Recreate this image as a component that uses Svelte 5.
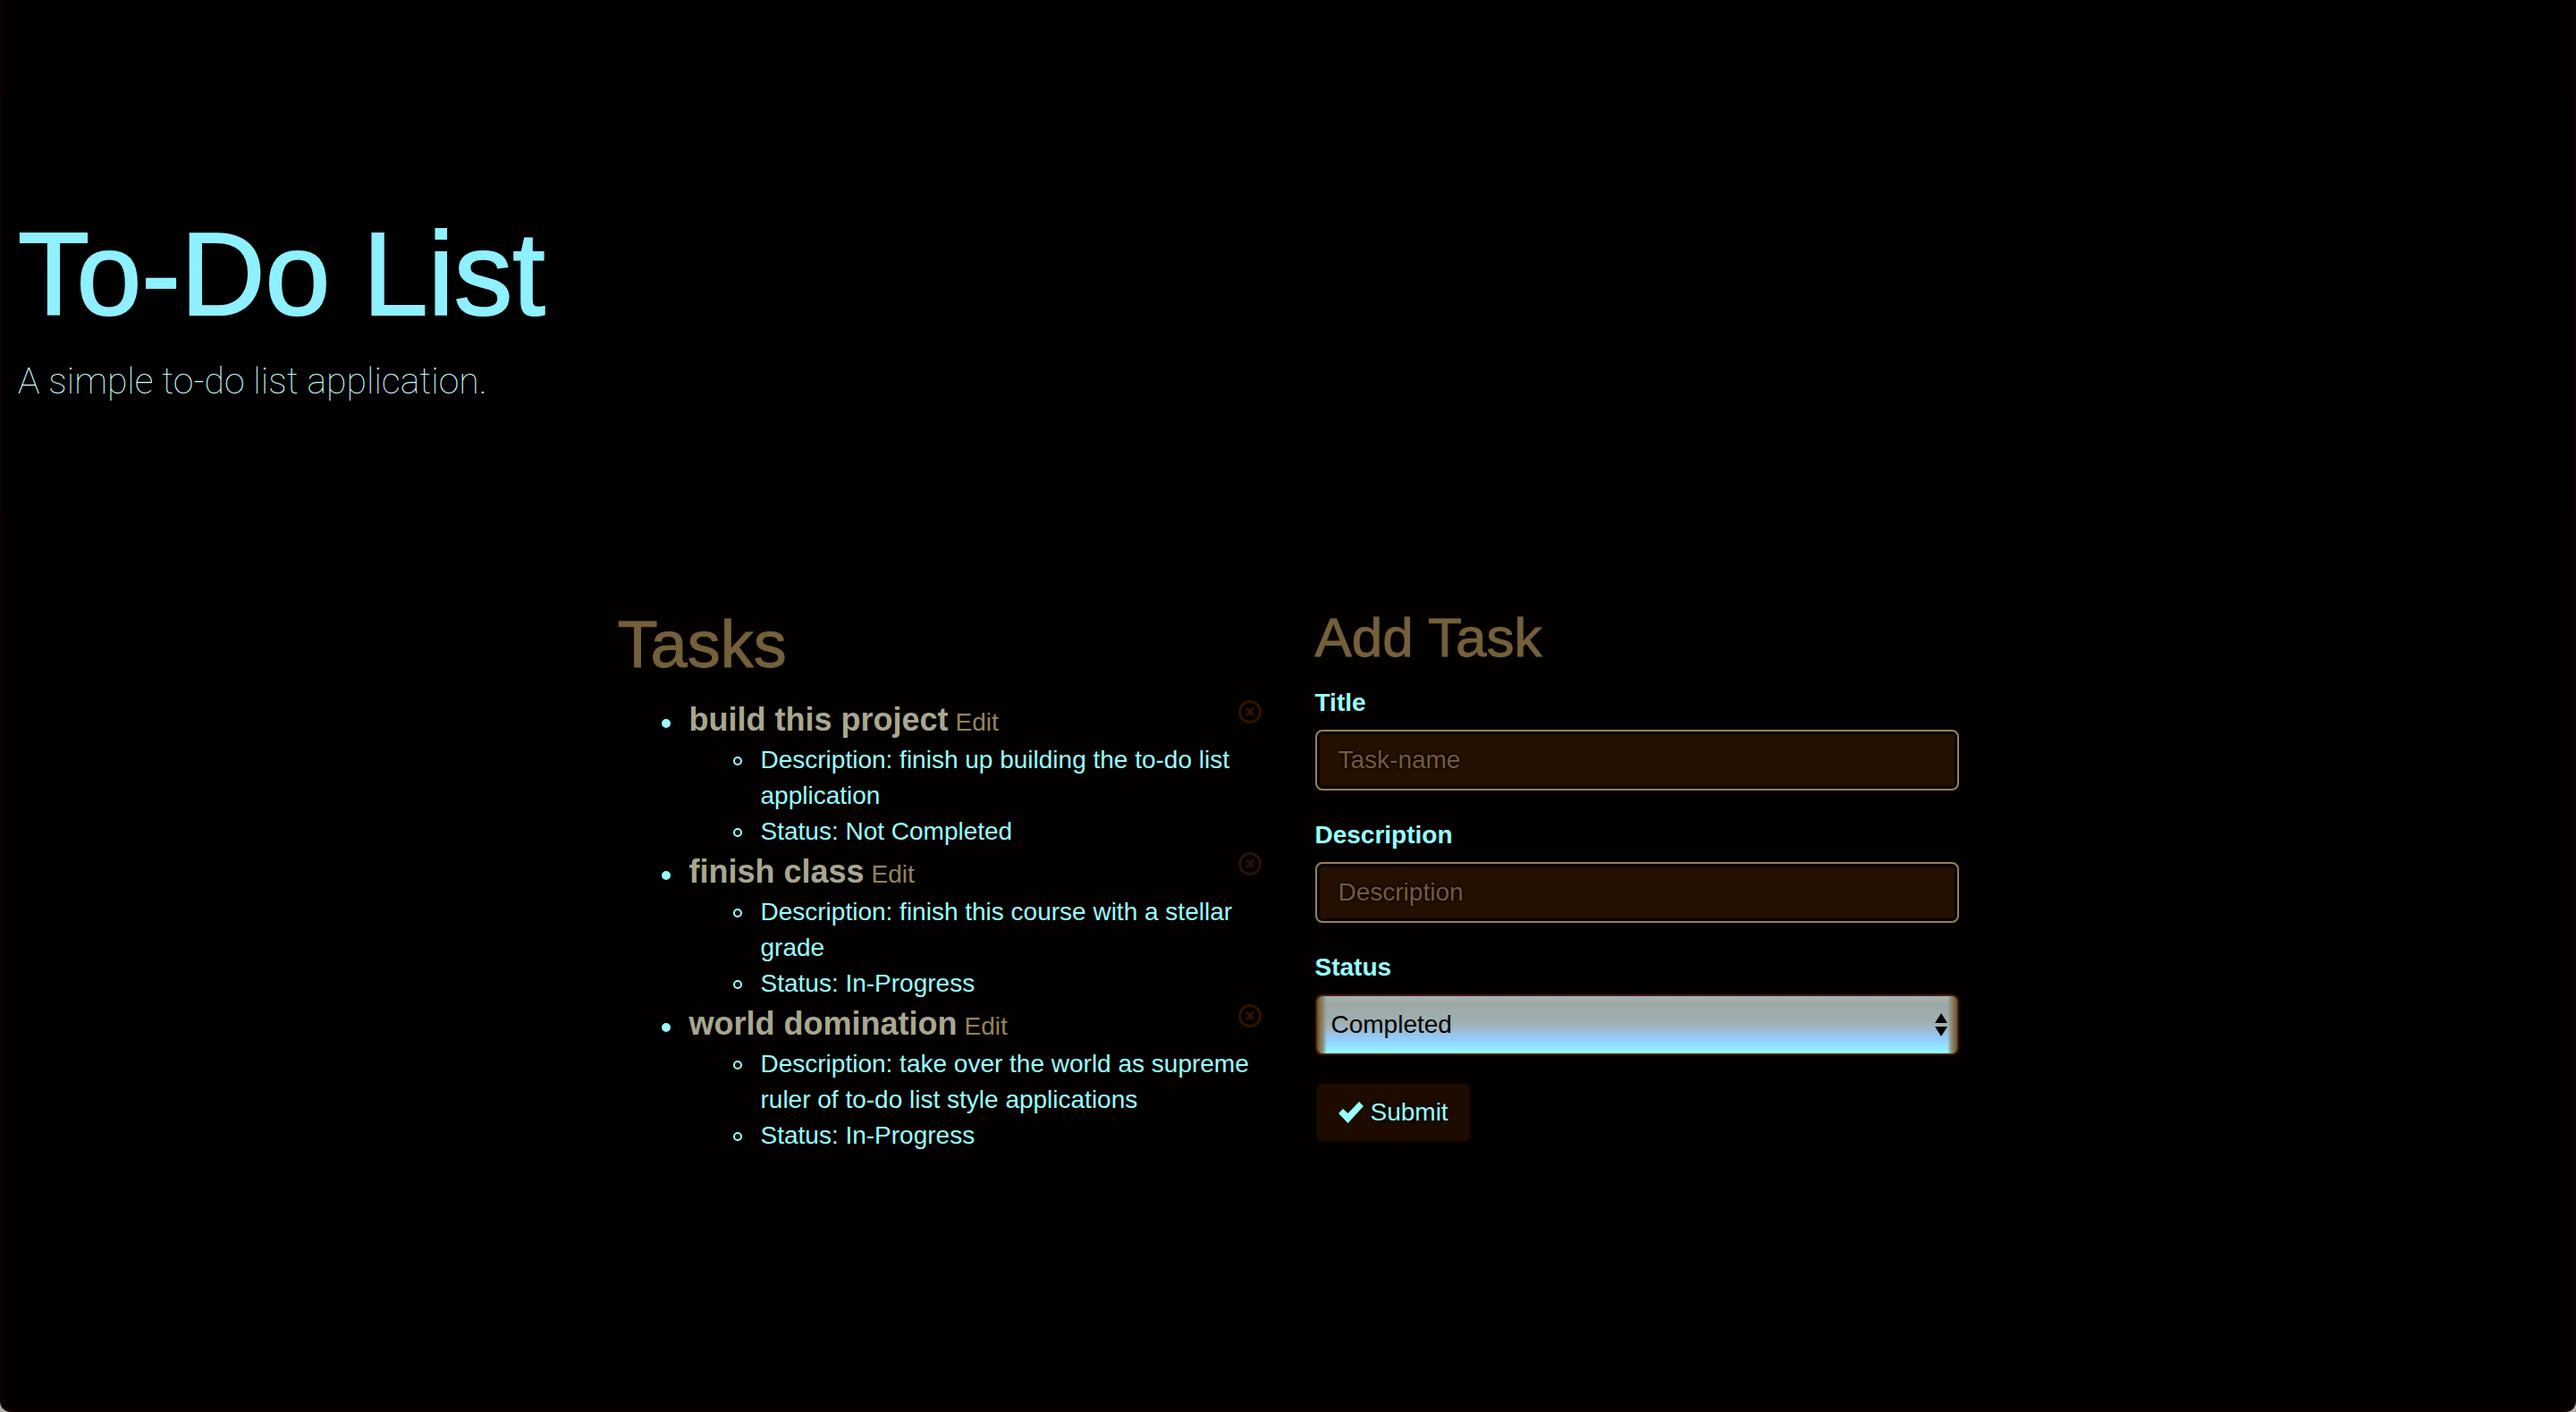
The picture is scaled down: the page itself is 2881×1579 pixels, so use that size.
<script>
  let tasks = $state([
    { title: 'build this project', description: 'finish up building the to-do list application', status: 'Not Completed' },
    { title: 'finish class', description: 'finish this course with a stellar grade', status: 'In-Progress' },
    { title: 'world domination', description: 'take over the world as supreme ruler of to-do list style applications', status: 'In-Progress' }
  ]);
  let title = $state('');
  let description = $state('');
  let status = $state('Completed');

  function add(event) {
    event.preventDefault();
    if (!title) return;
    tasks.push({ title, description, status });
    title = '';
    description = '';
  }
</script>

<div class="window">
  <header class="jumbotron">
    <h1>To-Do List</h1>
    <p>A simple to-do list application.</p>
  </header>

  <main>
    <section>
      <h2 class="tasks-heading">Tasks</h2>
      <ul class="tasks">
        {#each tasks as task, i}
          <li>
            <div class="task-head">
              <h3>{task.title}</h3>
              <a href="#edit">Edit</a>
              <button class="remove" type="button" aria-label="Remove {task.title}" onclick={() => tasks.splice(i, 1)}>
                <svg viewBox="0 0 26 26" width="26" height="26" fill="none" stroke="currentColor">
                  <circle cx="13" cy="13" r="11.5" stroke-width="3" />
                  <path d="M9 9l8 8M17 9l-8 8" stroke-width="3.2" />
                </svg>
              </button>
            </div>
            <ul class="details">
              <li>Description: {task.description}</li>
              <li>Status: {task.status}</li>
            </ul>
          </li>
        {/each}
      </ul>
    </section>

    <section>
      <h2 class="form-heading">Add Task</h2>
      <form onsubmit={add}>
        <div class="group">
          <label for="title">Title</label>
          <input id="title" type="text" placeholder="Task-name" bind:value={title} />
        </div>
        <div class="group">
          <label for="description">Description</label>
          <input id="description" type="text" placeholder="Description" bind:value={description} />
        </div>
        <div class="group">
          <label for="status">Status</label>
          <div class="select">
            <select id="status" bind:value={status}>
              <option>Completed</option>
              <option>In-Progress</option>
              <option>Not Completed</option>
            </select>
            <svg class="arrows" viewBox="0 0 14 26" width="14" height="26" aria-hidden="true">
              <path d="M7 0l7 11H0zM7 26l7-11H0z" fill="#000" />
            </svg>
          </div>
        </div>
        <button class="submit" type="submit">
          <svg viewBox="0 0 28 24" width="28" height="24" aria-hidden="true">
            <path d="M0 13l5-5 5.500 5L23 0l5 5L10.500 24z" fill="currentColor" />
          </svg>
          Submit
        </button>
      </form>
    </section>
  </main>
</div>

<style>
  :global(body) {
    margin: 0;
    background: #b0b0b0;
  }
  .window {
    box-sizing: border-box;
    min-height: 100vh;
    border: 2px solid #140000;
    border-top: 0;
    border-radius: 0 0 12px 12px;
    padding-top: 100px;
    background: #030000;
    color: #9ff;
    font: 28px/40px "Liberation Sans", Arial, sans-serif;
  }
  h1, h2, h3, p, ul {
    margin: 0;
  }
  h1, h2 {
    font-weight: 400;
  }
  .jumbotron {
    padding: 138px 18px 124px;
    background: #000;
  }
  h1 {
    font-size: 131px;
    line-height: 138px;
    color: #8ff0ff;
    -webkit-text-stroke: 2px #8ff0ff;
  }
  .jumbotron p {
    margin-top: 20px;
    font: 100 41px/60px Roboto, "Liberation Sans", sans-serif;
    color: #cff;
  }
  main {
    display: grid;
    grid-template-columns: 1fr 1fr;
    gap: 60px;
    box-sizing: border-box;
    max-width: 1500px;
    margin: 0 auto;
    padding: 100px 0 60px;
  }
  h2 {
    color: #74603a;
    -webkit-text-stroke: 1px #74603a;
  }
  .tasks-heading {
    font-size: 74px;
    line-height: 82px;
    margin-bottom: 18px;
  }
  .form-heading {
    font-size: 62px;
    line-height: 66px;
    margin-bottom: 20px;
  }
  ul {
    padding-left: 80px;
    list-style: none;
  }
  .tasks li::before {
    content: "";
    float: left;
    box-sizing: border-box;
    width: 10px;
    height: 10px;
    margin: 24px 21px 0 -31px;
    border: 2px solid #9ff;
    border-radius: 50%;
    background: #9ff;
  }
  .tasks .details li::before {
    margin-top: 16px;
    background: none;
  }
  .task-head {
    display: flex;
    align-items: baseline;
    gap: 8px;
    height: 50px;
  }
  h3 {
    font-size: 36px;
    line-height: 50px;
    color: #a8a890;
  }
  .task-head a {
    color: #94845c;
    text-decoration: none;
  }
  .remove {
    display: flex;
    align-self: flex-start;
    margin: 3px 0 0 auto;
    padding: 0;
    border: 0;
    background: none;
    color: #2c1400;
  }
  .group {
    margin-bottom: 30px;
  }
  label {
    display: block;
    margin-bottom: 10px;
    font-weight: 700;
  }
  input, select {
    display: block;
    box-sizing: border-box;
    width: 100%;
    height: 68px;
    margin: 0;
    border: 2px solid #94805c;
    border-radius: 8px;
    font: inherit;
  }
  input {
    padding: 12px 24px;
    background: #241000;
    box-shadow: inset 0 0 2px 3px #080200;
    color: #9ff;
  }
  input::placeholder {
    color: #745c38;
    opacity: 1;
    text-shadow: 0 0 3px #000, 0 0 3px #000;
  }
  .select {
    position: relative;
  }
  select {
    appearance: none;
    padding: 0 40px 0 16px;
    border-color: #4c1c00;
    background:
      linear-gradient(90deg, #6a5228, #8c8468cc 7px, transparent 11px, transparent calc(100% - 11px), #8c8468cc calc(100% - 7px), #6a5228),
      linear-gradient(#a8b4b0, #9ca8a4 15%, #a0b0b4 48%, #9cbcd0 60%, #94ccff 75%, #90ecff 92%, #9ff);
    color: #000;
  }
  .arrows {
    position: absolute;
    top: 21px;
    right: 13px;
    pointer-events: none;
  }
  .submit {
    display: flex;
    align-items: center;
    gap: 8px;
    height: 68px;
    padding: 0 24px;
    border: 2px solid #080200;
    border-radius: 8px;
    background: #1e0b00;
    color: #9ff;
    font: inherit;
    text-shadow: 0 0 4px #000, 0 0 4px #000;
  }
</style>
